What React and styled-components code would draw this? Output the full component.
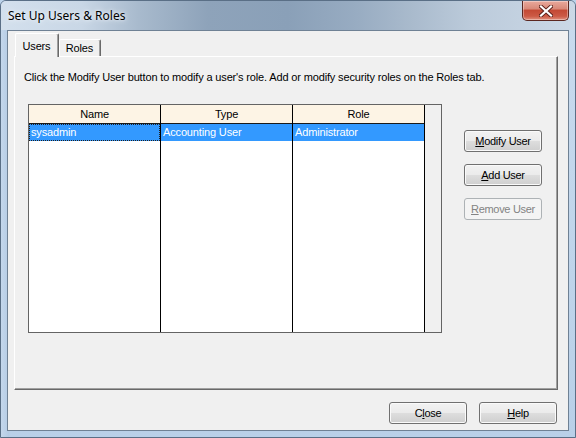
import React from 'react';
import styled, { createGlobalStyle } from 'styled-components';

const Global = createGlobalStyle`
  html, body { margin: 0; padding: 0; width: 576px; height: 438px; overflow: hidden; background: #bcd3ea; }
  * { box-sizing: border-box; }
`;

const Window = styled.div`
  width: 576px;
  height: 438px;
  display: flex;
  flex-direction: column;
  font-family: "Liberation Sans", Arial, sans-serif;
  font-size: 11px;
  letter-spacing: -0.15px;
  color: #000;
  background:
    linear-gradient(to right, #c4d7ec 0px, #b4cbe4 8px, rgba(180,203,228,0) 9px),
    linear-gradient(to bottom, #c9dbee 0%, #b9d0e8 100%);
  border: 1px solid #5a6f86;
  border-radius: 6px 6px 0 0;
`;

const TitleBar = styled.div`
  height: 29px;
  display: flex;
  align-items: flex-start;
  background: linear-gradient(to right,
    #d3e0ed 0%, #c9d7e6 14%, #a8bacd 24%, #8ea3ba 36%, #8aa0b8 50%,
    #98acc2 62%, #aabbcd 72%, #bccbdb 82%, #cbd8e6 100%);
  border-radius: 5px 5px 0 0;
`;

const Title = styled.div`
  font-family: "Noto Sans", "Liberation Sans", sans-serif;
  font-size: 12px;
  letter-spacing: 0;
  line-height: 16px;
  color: #000;
  padding: 7px 0 0 7px;
  text-shadow: 0 0 6px #eef3f8, 0 0 3px #eef3f8;
`;

const CloseBox = styled.div`
  margin-left: auto;
  margin-right: 6px;
  width: 47px;
  height: 20px;
  border: 1px solid #5b2720;
  border-top: none;
  border-radius: 0 0 5px 5px;
  background: linear-gradient(to bottom, #e9a99c 0%, #d98a7a 40%, #c44a35 50%, #cc5a45 80%, #e0917f 100%);
  box-shadow: inset 0 0 0 1px rgba(255,255,255,0.35);
  display: flex;
  align-items: center;
  justify-content: center;
`;

const Client = styled.div`
  flex: 1;
  margin: 0 6px 6px 6px;
  border: 1px solid #6f8194;
  background: #f0f0f0;
  display: flex;
  flex-direction: column;
  padding: 2px 10px 0 6px;
`;

const TabStrip = styled.div`
  display: flex;
  align-items: flex-end;
  height: 23px;
  padding-left: 1px;
  position: relative;
  z-index: 1;
`;

const Tab = styled.div`
  height: ${p => (p.$active ? '24px' : '17px')};
  width: ${p => p.$w}px;
  margin-bottom: ${p => (p.$active ? '-1px' : '0')};
  background: #f0f0f0;
  border-left: 1px solid #ffffff;
  border-top: 1px solid #ffffff;
  border-right: 1px solid #696969;
  box-shadow: inset -1px 0 0 #a0a0a0;
  border-radius: 2px 2px 0 0;
  display: flex;
  justify-content: center;
  align-items: ${p => (p.$active ? 'flex-start' : 'center')};
  padding-top: ${p => (p.$active ? '6px' : '0')};
  padding-right: 1px;
  line-height: 13px;
`;

const Panel = styled.div`
  width: 544px;
  height: 334px;
  border-left: 1px solid #ffffff;
  border-top: 1px solid #ffffff;
  border-right: 1px solid #696969;
  border-bottom: 1px solid #696969;
  box-shadow: inset -1px -1px 0 #a0a0a0;
  padding: 14px 15px 0 9px;
  display: flex;
  flex-direction: column;
`;

const Instruction = styled.div`
  line-height: 13px;
  white-space: nowrap;
`;

const Body = styled.div`
  display: flex;
  margin-top: 20px;
  padding-left: 4px;
`;

const ListView = styled.div`
  width: 415px;
  height: 229px;
  border: 1px solid #646464;
  display: flex;
  background: #ffffff;
`;

const Column = styled.div`
  width: 132px;
  border-right: 1px solid #000;
  display: flex;
  flex-direction: column;
`;

const HeaderCell = styled.div`
  height: 19px;
  background: #fdf4e5;
  border-bottom: 1px solid #1a1a1a;
  text-align: center;
  line-height: 18px;
`;

const Cell = styled.div`
  height: 17px;
  line-height: 16px;
  padding-left: 2px;
  background: ${p => (p.$selected ? '#3399ff' : '#ffffff')};
  color: ${p => (p.$selected ? '#ffffff' : '#000')};
  outline: ${p => (p.$focus ? '1px dotted #202020' : 'none')};
  outline-offset: -1px;
`;

const Filler = styled.div`
  flex: 1;
  background: #f0f0f0;
`;

const ButtonColumn = styled.div`
  display: flex;
  flex-direction: column;
  gap: 12px;
  margin-left: 22px;
  padding-top: 26px;
`;

const Button = styled.div`
  width: 78px;
  height: 22px;
  border: 1px solid ${p => (p.$disabled ? '#adb2b5' : '#707070')};
  border-radius: 3px;
  background: ${p => (p.$disabled
    ? '#f4f4f4'
    : 'linear-gradient(to bottom, #f2f2f2 0%, #ebebeb 48%, #dddddd 52%, #cfcfcf 100%)')};
  box-shadow: inset 0 0 0 1px ${p => (p.$disabled ? '#f4f4f4' : '#fafafa')};
  color: ${p => (p.$disabled ? '#838383' : '#000')};
  display: flex;
  align-items: center;
  justify-content: center;
  line-height: 13px;
  letter-spacing: -0.3px;
  u { text-decoration: underline; text-underline-offset: 1px; }
`;

const Footer = styled.div`
  display: flex;
  justify-content: flex-end;
  gap: 12px;
  padding-top: 12px;
  padding-right: 1px;
`;

const columns = [
  { name: 'Name', value: 'sysadmin', focus: true },
  { name: 'Type', value: 'Accounting User' },
  { name: 'Role', value: 'Administrator' },
];

export default function App() {
  return (
    <>
      <Global />
      <Window>
        <TitleBar>
          <Title>Set Up Users &amp; Roles</Title>
          <CloseBox>
            <svg width="14" height="12" viewBox="0 0 14 12">
              <path d="M2 1.5 L12 10.5 M12 1.5 L2 10.5" stroke="#5a1f18" strokeWidth="4" strokeLinecap="square" />
              <path d="M2 1.5 L12 10.5 M12 1.5 L2 10.5" stroke="#ffffff" strokeWidth="2.2" strokeLinecap="square" />
            </svg>
          </CloseBox>
        </TitleBar>
        <Client>
          <TabStrip>
            <Tab $active $w={44}>Users</Tab>
            <Tab $w={42}>Roles</Tab>
          </TabStrip>
          <Panel>
            <Instruction>
              Click the Modify User button to modify a user's role. Add or modify security roles on the Roles tab.
            </Instruction>
            <Body>
              <ListView>
                {columns.map(c => (
                  <Column key={c.name}>
                    <HeaderCell>{c.name}</HeaderCell>
                    <Cell $selected $focus={c.focus}>{c.value}</Cell>
                  </Column>
                ))}
                <Filler />
              </ListView>
              <ButtonColumn>
                <Button><span><u>M</u>odify User</span></Button>
                <Button><span><u>A</u>dd User</span></Button>
                <Button $disabled><span><u>R</u>emove User</span></Button>
              </ButtonColumn>
            </Body>
          </Panel>
          <Footer>
            <Button><span>C<u>l</u>ose</span></Button>
            <Button><span><u>H</u>elp</span></Button>
          </Footer>
        </Client>
      </Window>
    </>
  );
}
